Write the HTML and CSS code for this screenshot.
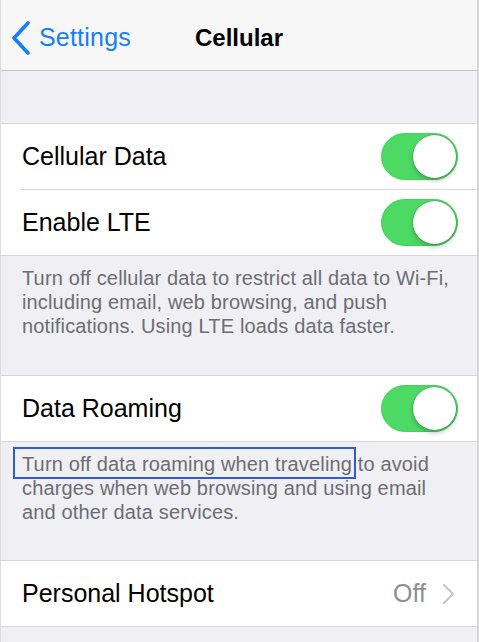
FILE: index.html
```html
<!DOCTYPE html>
<html>
<head>
<meta charset="utf-8">
<link rel="stylesheet" href="styles.css">
</head>
<body>
<div class="screen">
  <header class="nav">
    <div class="back">
      <svg class="back-chev" width="22" height="34" viewBox="0 0 22 34"><path d="M18 2 L4 17 L18 32" fill="none" stroke="#157efb" stroke-width="3.6" stroke-linecap="round" stroke-linejoin="round"/></svg>
      <span class="back-label">Settings</span>
    </div>
    <div class="title">Cellular</div>
  </header>
  <div class="spacer"></div>
  <section class="group">
    <div class="row">
      <span class="label">Cellular Data</span>
      <span class="toggle"><span class="knob"></span></span>
    </div>
    <div class="sep"></div>
    <div class="row">
      <span class="label">Enable LTE</span>
      <span class="toggle"><span class="knob"></span></span>
    </div>
  </section>
  <p class="footer">Turn off cellular data to restrict all data to Wi-Fi, including email, web browsing, and push notifications. Using LTE loads data faster.</p>
  <section class="group">
    <div class="row">
      <span class="label">Data Roaming</span>
      <span class="toggle"><span class="knob"></span></span>
    </div>
  </section>
  <p class="footer footer2"><span class="highlight">Turn off data roaming when traveling</span> to avoid charges when web browsing and using email and other data services.</p>
  <section class="group">
    <div class="row">
      <span class="label">Personal Hotspot</span>
      <span class="detail">Off</span>
      <svg class="chev" width="14" height="22" viewBox="0 0 14 22"><path d="M2 2 L11 11 L2 20" fill="none" stroke="#c7c7cc" stroke-width="2.2" stroke-linecap="round" stroke-linejoin="round"/></svg>
    </div>
  </section>
</div>
</body>
</html>
```

FILE: styles.css
```css
html, body {
  margin: 0;
  padding: 0;
}
body {
  background: #efeff4;
  font-family: "Liberation Sans", Arial, sans-serif;
}
.screen {
  width: 479px;
  height: 642px;
  box-sizing: border-box;
  border-left: 1px solid #dcdcdc;
  border-right: 2px solid #d6d6d8;
  background: #efeff4;
  overflow: hidden;
}
.nav {
  height: 71px;
  box-sizing: border-box;
  background: #f7f7f8;
  border-bottom: 1px solid #c4c4c6;
  display: flex;
  align-items: center;
  position: relative;
}
.back {
  display: flex;
  align-items: center;
  padding-left: 9px;
  padding-top: 5px;
}
.back-chev {
  display: block;
  margin-right: 7px;
}
.back-label {
  color: #157efb;
  font-size: 25px;
  letter-spacing: 0.2px;
}
.title {
  position: absolute;
  left: 0;
  right: 0;
  top: 0;
  bottom: 0;
  display: flex;
  align-items: center;
  justify-content: center;
  font-size: 24px;
  font-weight: bold;
  color: #000;
  padding-top: 5px;
  pointer-events: none;
}
.spacer {
  height: 52px;
}
.group {
  background: #fff;
  border-top: 1px solid #d6d6da;
  border-bottom: 1px solid #d6d6da;
}
.row {
  height: 65px;
  display: flex;
  align-items: center;
  padding-left: 21px;
  padding-right: 19px;
}
.label {
  flex: 1;
  font-size: 25px;
  color: #000;
}
.sep {
  height: 1px;
  margin-left: 20px;
  background: #d6d6da;
}
.toggle {
  width: 77px;
  height: 47px;
  border-radius: 24px;
  background: #4cd964;
  position: relative;
  box-sizing: border-box;
  border: 1px solid #47cf5e;
}
.knob {
  position: absolute;
  right: 1px;
  top: 1px;
  width: 43px;
  height: 43px;
  border-radius: 50%;
  background: #fff;
  box-shadow: 0 0 0 0.5px rgba(40, 130, 50, 0.6), 0 3px 5px rgba(0, 0, 0, 0.22);
}
.footer {
  margin: 0;
  height: 119px;
  box-sizing: border-box;
  padding: 10px 20px 0 21px;
  font-size: 20px;
  letter-spacing: 0.15px;
  line-height: 24px;
  color: #6d6d72;
}
.footer2 {
  height: 118px;
  padding-top: 10px;
}
.highlight {
  position: relative;
}
.highlight::after {
  content: "";
  position: absolute;
  left: -9px;
  right: -4px;
  top: -6px;
  bottom: -4px;
  border: 2px solid #2d60c8;
}
.detail {
  font-size: 25px;
  color: #8e8e93;
  margin-right: 16px;
}
.chev {
  display: block;
  margin-right: 2px;
}
```
